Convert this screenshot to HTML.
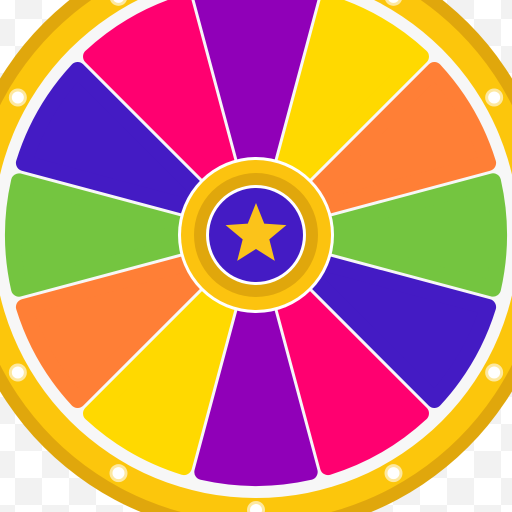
<!DOCTYPE html>
<html><head><meta charset="utf-8"><style>
html,body{margin:0;padding:0;width:512px;height:512px;overflow:hidden;
background-color:#fff;
background-image:conic-gradient(#f2f2f2 25%,#fff 0 50%,#f2f2f2 0 75%,#fff 0);
background-size:54px 54px;background-position:-12px -8px;}
svg{position:absolute;left:0;top:0}
</style></head><body>
<svg width="512" height="512" viewBox="0 0 512 512" xmlns="http://www.w3.org/2000/svg">
<g transform="translate(256,235)">
<circle r="300" fill="#e0a70c"/>
<circle r="287" fill="#fcc60c"/>
<circle r="263" fill="#f7f7f7"/>
<g id="segs"></g>
<g id="bulbs"></g>
<circle r="78" fill="#fff"/>
<circle r="75" fill="#fcc30f"/>
<circle r="62" fill="#e0a70c"/>
<circle r="50" fill="#fff"/>
<circle r="47" fill="#441bc4"/>
<polygon id="star" fill="#fbc31a"/>
</g>
</svg>
<script>
var cols=["#9000b8","#ffd900","#ff7f36","#74c540","#441bc4","#ff0070","#9000b8","#ffd900","#ff7f36","#74c540","#441bc4","#ff0070"];
var ns="http://www.w3.org/2000/svg",g=document.getElementById("segs"),b=document.getElementById("bulbs");
var rr=8,d=1.5+rr,R=251-rr;
function pt(a,t,dn,side){var ux=Math.sin(a),uy=-Math.cos(a);var nx=Math.cos(a)*side,ny=Math.sin(a)*side;return [t*ux+dn*nx,t*uy+dn*ny];}
for(var i=0;i<12;i++){
 var c=i*Math.PI/6,a1=c-Math.PI/12,a2=c+Math.PI/12;
 var t=Math.sqrt(R*R-d*d);
 var i1=pt(a1,60,d,1),o1=pt(a1,t,d,1),o2=pt(a2,t,d,-1),i2=pt(a2,60,d,-1);
 var p=document.createElementNS(ns,"path");
 p.setAttribute("d","M"+i1+" L"+o1+" A"+R+" "+R+" 0 0 1 "+o2+" L"+i2+" Z");
 p.setAttribute("fill",cols[i]);p.setAttribute("stroke",cols[i]);
 p.setAttribute("stroke-width",2*rr);p.setAttribute("stroke-linejoin","round");
 g.appendChild(p);
 var bx=275*Math.sin(c),by=-275*Math.cos(c);
 var c1=document.createElementNS(ns,"circle");c1.setAttribute("cx",bx);c1.setAttribute("cy",by);c1.setAttribute("r",9);c1.setAttribute("fill","#fde8a0");b.appendChild(c1);
 var c2=document.createElementNS(ns,"circle");c2.setAttribute("cx",bx);c2.setAttribute("cy",by);c2.setAttribute("r",6);c2.setAttribute("fill","#fff");b.appendChild(c2);
}
var s=[];for(var k=0;k<10;k++){var r=k%2?14:32,a=k*Math.PI/5;s.push((r*Math.sin(a)).toFixed(2)+","+(-r*Math.cos(a)).toFixed(2));}
document.getElementById("star").setAttribute("points",s.join(" "));
</script>
</body></html>
